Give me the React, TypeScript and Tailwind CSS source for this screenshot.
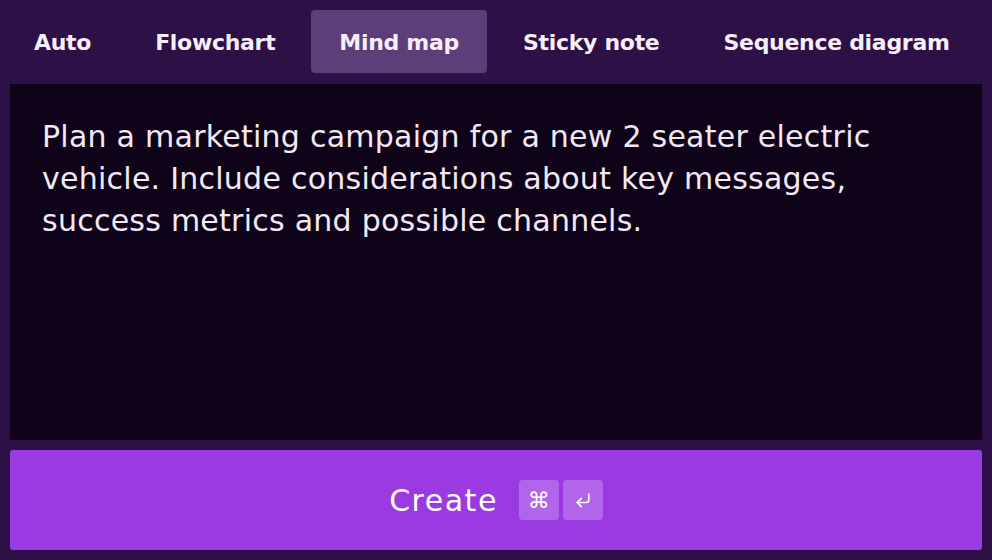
const tabs = ['Auto', 'Flowchart', 'Mind map', 'Sticky note', 'Sequence diagram'];

export default function App() {
  const active = 'Mind map';

  return (
    <div
      className="w-[992px] h-[560px] bg-[#2d1045] flex flex-col px-[10px] pb-[10px]"
      style={{ fontFamily: '"DejaVu Sans", sans-serif' }}
    >
      <div className="flex items-start gap-[8px] h-[84px] -ml-[4px] pt-[10px]">
        {tabs.map((tab) => (
          <button
            key={tab}
            className={
              'shrink-0 whitespace-nowrap h-[63px] px-[28px] pt-[2px] rounded-[4px] text-[22px] font-bold text-[#f6eef8] tracking-[-0.3px] ' +
              (tab === active ? 'bg-[#5e3e79]' : '')
            }
          >
            {tab}
          </button>
        ))}
      </div>

      <div className="flex-1 bg-[#0e0318] px-[32px] pt-[32px]">
        <p className="text-[30px] leading-[42px] tracking-[0.25px] text-[#f2e9f4]">
          Plan a marketing campaign for a new 2 seater electric
          <br />
          vehicle. Include considerations about key messages,
          <br />
          success metrics and possible channels.
        </p>
      </div>

      <button className="mt-[10px] h-[100px] bg-[#9c3ae2] rounded-[3px] flex items-center justify-center gap-[21px]">
        <span className="text-[30px] tracking-[1.5px] text-white">Create</span>
        <span className="flex gap-[4px]">
          <span className="w-[40px] h-[40px] rounded-[4px] bg-[#b165eb] flex items-center justify-center text-white text-[22px]">
            ⌘
          </span>
          <span className="w-[40px] h-[40px] rounded-[4px] bg-[#b165eb] flex items-center justify-center text-white">
            <svg width="20" height="20" viewBox="0 0 24 24" fill="none" stroke="currentColor" strokeWidth="2" strokeLinecap="round" strokeLinejoin="round">
              <path d="M19 5v7a3 3 0 0 1-3 3H5" />
              <path d="m10 10-5 5 5 5" />
            </svg>
          </span>
        </span>
      </button>
    </div>
  );
}
